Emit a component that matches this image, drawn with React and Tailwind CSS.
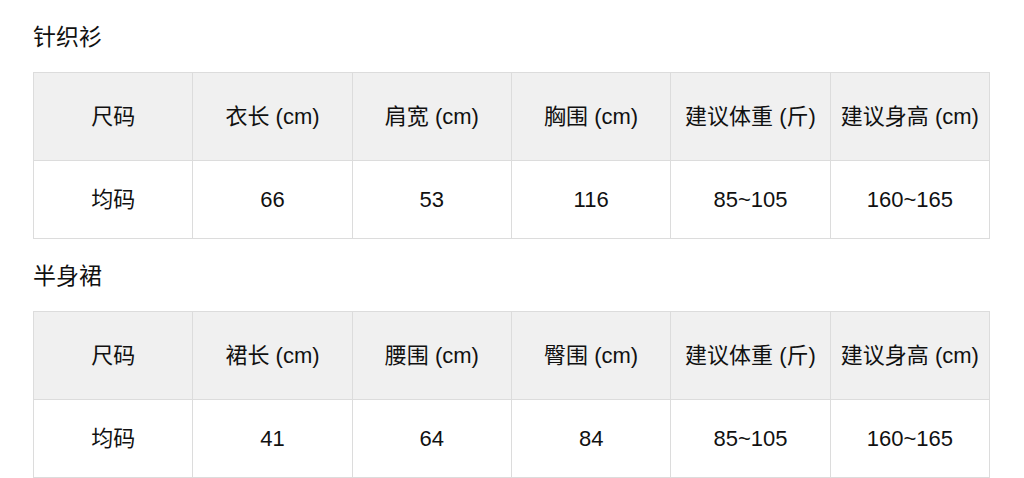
import React from "react";

const tables = [
  {
    title: "针织衫",
    headers: ["尺码", "衣长 (cm)", "肩宽 (cm)", "胸围 (cm)", "建议体重 (斤)", "建议身高 (cm)"],
    row: ["均码", "66", "53", "116", "85~105", "160~165"],
  },
  {
    title: "半身裙",
    headers: ["尺码", "裙长 (cm)", "腰围 (cm)", "臀围 (cm)", "建议体重 (斤)", "建议身高 (cm)"],
    row: ["均码", "41", "64", "84", "85~105", "160~165"],
  },
];

function SizeTable({ title, headers, row, first }) {
  return (
    <div className={first ? "" : "mt-[23px]"}>
      <h2 className="h-[28px] text-[23px] leading-[28px] font-normal text-[#111] mb-[21px]">
        {title}
      </h2>
      <table className="w-[957px] border-collapse table-fixed text-[22px] text-[#111]">
        <thead>
          <tr className="h-[88px] bg-[#f0f0f0]">
            {headers.map((h) => (
              <th key={h} className="border border-[#dcdcdc] font-normal text-center">
                {h}
              </th>
            ))}
          </tr>
        </thead>
        <tbody>
          <tr className="h-[78px] bg-white">
            {row.map((c, i) => (
              <td key={i} className="border border-[#dcdcdc] text-center">
                {c}
              </td>
            ))}
          </tr>
        </tbody>
      </table>
    </div>
  );
}

export default function App() {
  return (
    <div
      className="w-[1024px] h-[478px] bg-white pt-[23px] pl-[33px] overflow-hidden"
      style={{ fontFamily: '"Liberation Sans", "Noto Sans CJK SC", sans-serif' }}
    >
      {tables.map((t, i) => (
        <SizeTable key={t.title} {...t} first={i === 0} />
      ))}
    </div>
  );
}
